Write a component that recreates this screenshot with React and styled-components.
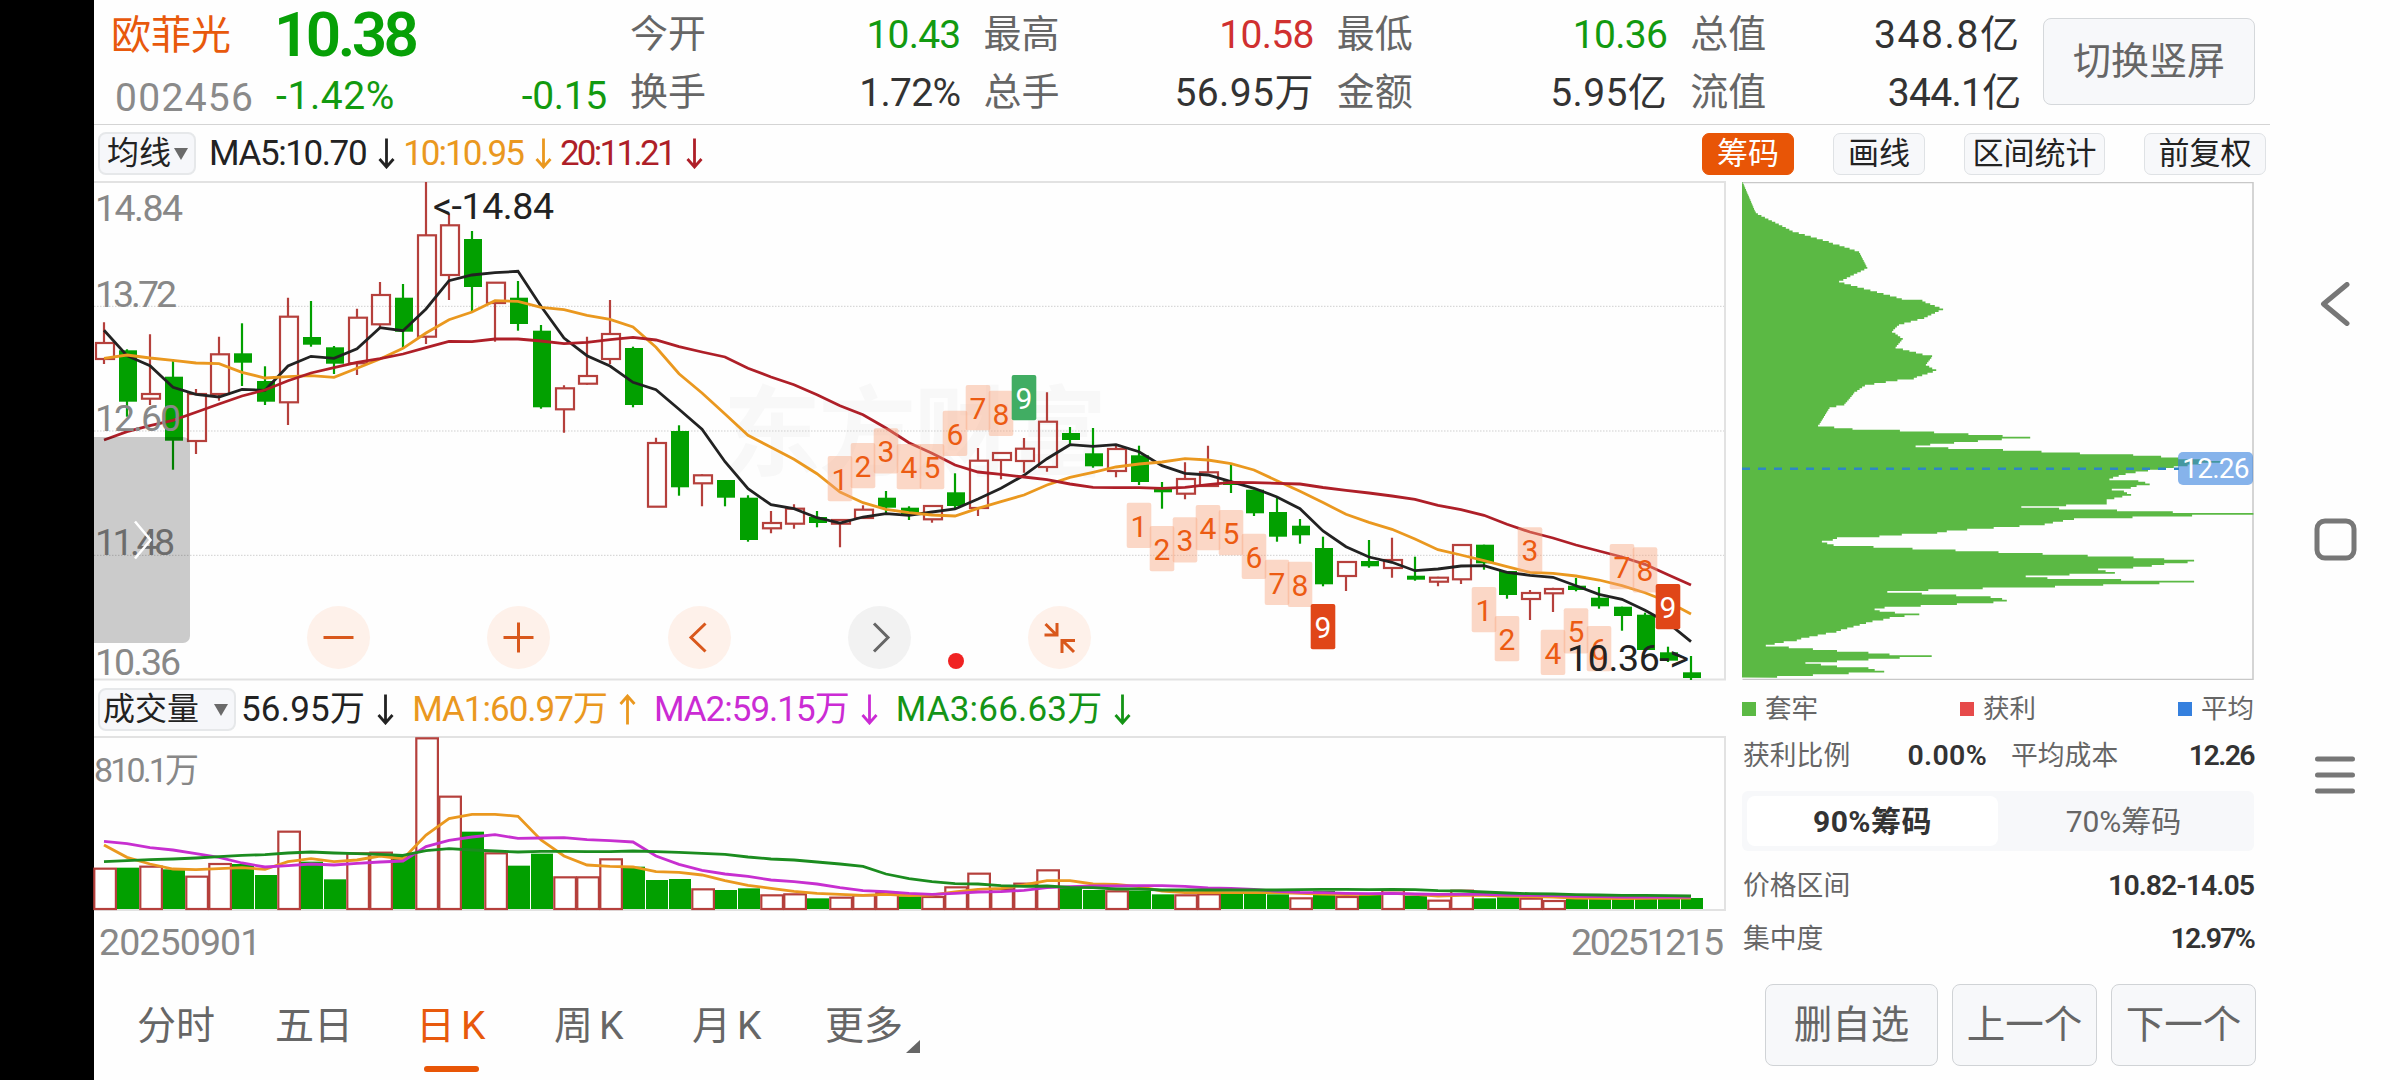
/* eslint-disable react/prop-types */
import React from "react";
import styled, { createGlobalStyle } from "styled-components";

const RED = "#b5403c";
const GREEN = "#02a000";
const ORANGE = "#e8590c";

const STEP = 23;
const cx = (i) => 10 + i * STEP;

// [up, high, bodyTop, bodyBottom, low]
const CANDLES = [
  [1, 140.3, 161, 177, 182], [0, 167.3, 168.3, 219.7, 234.7], [1, 152.3, 212, 216.7, 223],
  [0, 177.3, 194.7, 258.7, 287.7], [1, 207, 212, 259, 272], [1, 154.7, 172.3, 212, 218.7],
  [0, 141.3, 171.3, 180.7, 204], [0, 184.3, 199, 219.7, 223], [1, 115.7, 134.7, 220.3, 243],
  [0, 119, 155, 162.7, 164.7], [0, 164, 165.3, 181.7, 192], [1, 126.7, 135.7, 181.3, 193],
  [1, 100, 113, 142.3, 145.7], [0, 102, 115.7, 149.7, 165.7], [1, 0, 53.3, 154.7, 162],
  [1, 31.3, 43.3, 93, 118], [0, 49, 57, 105, 129.7], [1, 100.7, 100.7, 121, 159.7],
  [0, 99, 115.7, 142, 148.7], [0, 143, 148.7, 225.3, 226.7], [1, 203.3, 206.3, 227.3, 250.7],
  [1, 154.7, 194, 201.7, 202.7], [1, 118, 152, 177, 182], [0, 164.7, 166, 223, 225.3],
  [1, 255.7, 261, 324.7, 325], [0, 243.3, 249, 305.3, 313.7], [1, 292.3, 293.3, 301.3, 324.3],
  [0, 298, 298, 315.7, 324.3], [0, 313.3, 315.7, 358, 359.7], [1, 329, 341, 346.3, 351.3],
  [1, 322.3, 326.7, 341.7, 346.7], [0, 329, 335, 341, 345.3], [1, 337.3, 338, 341.7, 365.3],
  [1, 323.3, 327.7, 336, 336], [0, 309, 315.7, 325.7, 331.7], [0, 324.3, 325.7, 333, 338],
  [1, 324, 324, 337.3, 340.7], [0, 291.3, 310.3, 324, 326.3], [1, 266, 278.7, 326, 334],
  [1, 271, 271, 278, 297.3], [1, 256, 266.7, 279, 290.7], [1, 210.3, 239.7, 285, 289.7],
  [0, 245, 251, 258, 262], [0, 246, 271.3, 284.3, 285.7], [1, 263.7, 267, 289, 295.3],
  [0, 263.7, 273.3, 300, 303], [0, 300, 306.7, 310.3, 326.7], [1, 280.3, 297, 311.7, 317.3],
  [1, 263.7, 290.3, 304, 305], [0, 281.3, 299.3, 303, 311], [0, 307.7, 307.7, 331.3, 334],
  [0, 314.7, 330, 354.7, 359.7], [0, 337, 343.7, 353.3, 361.7], [0, 354.7, 366, 402.3, 404.3],
  [1, 380, 380, 394, 409], [0, 358, 379, 384.3, 385.7], [1, 355.7, 378, 386, 395.7],
  [0, 374.7, 393.7, 397.7, 398.7], [1, 394.7, 395.7, 399.7, 404.3], [1, 363, 363, 397.3, 402],
  [0, 362.7, 362.7, 381.3, 387.7], [0, 389, 389, 413, 416.7], [1, 408, 411, 417, 438],
  [1, 405.7, 407, 411.3, 430], [0, 396, 403.7, 408, 409.3], [0, 405, 415.7, 424.3, 426.7],
  [0, 424.7, 424.7, 434, 448.7], [0, 430.7, 432.7, 468, 469], [0, 464.7, 470.3, 478.7, 480],
  [0, 474, 490.3, 496, 498],
];

const MA5 = [
  148.3, 173.7, 183.7, 205.3, 212.3, 215, 207.3, 208.3, 184, 174.3, 176.3, 166.7, 145.7, 148.7,
  127, 98.7, 93, 90.7, 89.3, 124.3, 156, 173.7, 184, 200.3, 207.7, 227.3, 247.3, 279.7, 306.7,
  322.7, 326.7, 335.7, 341, 335, 331.7, 333.3, 330, 327, 317, 306.3, 293.3, 276.7, 262.7, 264.3,
  262.7, 269.7, 283.7, 291.3, 293, 299.7, 306.3, 315, 326.7, 349, 364.7, 375, 380.3, 388.7, 387,
  384, 383.7, 390.3, 393.3, 395.3, 403.7, 412.3, 417.3, 428.3, 441, 459.7,
];
const MA10 = [
  176.3, 173, 176, 178.3, 181, 181.7, 190.3, 196, 194.7, 193.7, 195.3, 186.3, 177, 166.3, 151,
  137.7, 130, 118.7, 119.3, 125.3, 127.7, 133.3, 137.3, 145, 165.3, 191.7, 211, 232, 253.3,
  265.3, 277.3, 291.7, 310, 320.7, 327.3, 330.7, 333, 334, 326.3, 319.7, 313, 303, 295.3, 290.3,
  285, 282, 280, 276.7, 278, 281.7, 288, 298.7, 309.3, 320.5, 332.3, 340.3, 347.3, 357, 367.7,
  373, 378.7, 384.7, 390.3, 391.3, 394, 398, 403.7, 410.7, 419.7, 432,
];
const MA20 = [
  258, 249.7, 243.7, 238.3, 230.3, 222, 214, 208, 198.7, 191, 185.7, 180.3, 176.7, 172, 165.7,
  159.3, 159.7, 157, 157, 159, 161.7, 160.3, 157.7, 155.3, 158, 164.7, 170, 175, 186.3, 195,
  202.7, 212.7, 223.7, 232.7, 246, 260.7, 271.3, 283, 290, 292.3, 295, 297.7, 302, 305.3, 305.6,
  305.7, 306.3, 305.3, 302.7, 300.3, 300.7, 301.3, 302, 305.5, 308.3, 311, 314, 317.3, 323.3,
  327.7, 333.3, 342.3, 350, 356, 363, 369, 375, 382.3, 392.7, 403,
];

// [candle index, count, top]
const COUNTS = [
  [32, 1, 274], [33, 2, 261], [34, 3, 246.3], [35, 4, 262], [36, 5, 262], [37, 6, 228.7],
  [38, 7, 203], [39, 8, 208.7], [40, 9, 193, "#41ad63"],
  [45, 1, 320.7], [46, 2, 344], [47, 3, 335.3], [48, 4, 323], [49, 5, 328], [50, 6, 351.7],
  [51, 7, 377.7], [52, 8, 379.7], [53, 9, 422, "#e04618"],
  [60, 1, 405], [61, 2, 434], [62, 3, 345.3], [63, 4, 447.7], [64, 5, 426.3], [65, 6, 444],
  [66, 7, 362], [67, 8, 365.3], [68, 9, 402, "#e04618"],
];

// volume samples, three units per pixel
const vy = (v) => v / 3 - 57;
const VOL_COLORS = [
  "RGRGRRGGRG",
  "GRRGRRGRGG",
  "RRRGGGRGGR",
  "RGRRRGRRRR",
  "RRGGRGGRRG",
  "GGRGRGRGRR",
  "GGRRGGGGGG",
].join("");
const VOLS = [
  563, 563, 557, 568, 587, 549, 552, 585, 452, 545, 598, 517, 515, 525, 172, 347, 455, 517, 557,
  521, 589, 589, 535, 560, 600, 597, 625, 630, 625, 643, 640, 655, 650, 643, 636, 649, 648, 619,
  578, 625, 608, 568, 620, 630, 631, 632, 643, 643, 640, 637, 640, 643, 652, 633, 648, 643, 628,
  647, 659, 629, 655, 652, 653, 660, 656, 657, 657, 656, 655, 654,
];
const VMA1 = [
  495, 532, 552, 567, 569, 566, 563, 568, 545, 536, 545, 540, 528, 537, 465, 416, 403, 403, 409,
  480, 528, 555, 559, 561, 575, 577, 585, 602, 616, 625, 634, 640, 643, 646, 643, 647, 645, 636,
  628, 625, 615, 602, 602, 612, 613, 620, 633, 638, 637, 638, 638, 638, 640, 642, 644, 643, 640,
  643, 648, 646, 646, 648, 650, 651, 654, 655, 656, 655, 654, 654,
];
const VMA2 = [
  484, 491, 503, 510, 521, 532, 549, 561, 557, 552, 555, 550, 546, 543, 500, 481, 471, 464, 475,
  474, 473, 479, 482, 486, 528, 553, 571, 582, 589, 600, 605, 612, 623, 632, 635, 640, 643, 640,
  636, 635, 631, 623, 620, 618, 618, 617, 617, 619, 624, 625, 628, 634, 637, 638, 640, 641, 640,
  642, 643, 643, 643, 645, 646, 647, 649, 650, 651, 651, 651, 651,
];
const VMA3 = [
  545, 542, 539, 537, 534, 530, 526, 524, 519, 516, 519, 521, 523, 526, 512, 506, 510, 513, 516,
  514, 514, 515, 515, 513, 515, 517, 520, 523, 531, 537, 540, 546, 552, 559, 582, 596, 605, 611,
  612, 617, 619, 618, 622, 623, 627, 627, 630, 630, 630, 630, 630, 630, 629, 628, 628, 629, 628,
  629, 632, 633, 636, 639, 641, 642, 644, 645, 646, 646, 647, 648,
];

// chip distribution profile: [price level, amount]
const CHIPS = [
  [22, 38], [115, 76], [170, 183], [205, 300], [232, 376], [280, 400], [322, 318], [372, 500],
  [380, 560], [403, 620], [430, 565], [450, 492], [470, 472], [493, 503], [518, 482], [547, 588],
  [570, 570], [588, 600], [610, 535], [632, 393], [655, 362], [690, 333], [700, 290], [755, 257],
  [761, 357], [788, 873], [813, 540], [818, 635], [843, 1172], [848, 1253], [860, 1430],
  [871, 1330], [880, 1290], [888, 1215], [897, 1150], [912, 1103], [920, 1187], [927, 1220],
  [938, 1165], [945, 1110], [952, 1145], [960, 1166], [976, 1095], [988, 1095], [996, 847],
  [1001, 957], [1005, 1125], [1011, 1287], [1016, 1521], [1022, 1343], [1028, 1170],
  [1033, 1000], [1048, 915], [1053, 842], [1058, 767], [1063, 690], [1073, 603], [1078, 500],
  [1083, 435], [1088, 367], [1093, 312], [1103, 268], [1110, 302], [1115, 418], [1121, 531],
  [1126, 656], [1131, 781], [1136, 909], [1141, 1040], [1146, 1173], [1151, 1262], [1157, 1349],
  [1165, 1330], [1171, 1262], [1178, 1172], [1185, 1070], [1190, 1092], [1196, 1119],
  [1202, 987], [1206, 860], [1210, 923], [1215, 1137], [1221, 1349], [1227, 1248], [1232, 1085],
  [1238, 945], [1242, 735], [1247, 577], [1251, 458], [1255, 558], [1260, 658], [1265, 758],
  [1270, 781], [1276, 805], [1282, 766], [1287, 660], [1292, 555], [1297, 450], [1302, 421],
  [1306, 390], [1310, 436], [1315, 480], [1321, 551], [1327, 508], [1332, 465], [1340, 415],
  [1370, 310], [1395, 195], [1413, 105], [1419, 172], [1424, 242], [1430, 312], [1436, 403],
  [1445, 587], [1451, 494], [1456, 403], [1461, 312], [1465, 220], [1469, 265], [1473, 312],
  [1478, 357], [1483, 403], [1490, 449], [1496, 346], [1501, 242], [1508, 138],
];

const line = (values, fn = (v) => v) => values.map((v, i) => `${cx(i)},${fn(v)}`).join(" ");

const chipPath = () => {
  const h = 5.2;
  let d = "M0 0";
  for (let y = 22; y < 1508; y += h) {
    const hit = CHIPS.find(([p]) => p >= y && p < y + h);
    let x;
    if (hit) {
      x = hit[1];
    } else {
      const mid = y + h / 2;
      const k = CHIPS.findIndex(([p]) => p > mid);
      if (k < 1) break;
      const [y0, x0] = CHIPS[k - 1];
      const [y1, x1] = CHIPS[k];
      x = x0 + ((x1 - x0) * (mid - y0)) / (y1 - y0);
    }
    const px = ((x - 36) / 2.904).toFixed(1);
    d += `L${px} ${((y - 22) / 3).toFixed(2)}L${px} ${((y + h - 22) / 3).toFixed(2)}`;
  }
  return `${d}L0 495.6Z`;
};

const Arrow = ({ up }) => (
  <ArrowSvg width="17" height="31" viewBox="0 0 17 31" $up={up}>
    <path d="M8.5 0.5V29M1.5 21L8.5 29L15.5 21" />
  </ArrowSvg>
);

const Stat = ({ label, value, color, spacing }) => (
  <StatCell>
    <StatLabel>{label}</StatLabel>
    <StatValue $color={color} $spacing={spacing}>
      {value}
    </StatValue>
  </StatCell>
);

const Glyph = ({ d, color = "#d9581c" }) => (
  <svg width="63" height="63" viewBox="0 0 63 63" fill="none" stroke={color} strokeWidth="3">
    <path d={d} />
  </svg>
);

const PriceChart = () => (
  <ChartBox $height={499}>
    <ChartSvg width="1632" height="499" viewBox="0 0 1632 499">
      <Watermark x="629" y="286" textLength="384">
        东方财富
      </Watermark>
      {[124.3, 249, 373.3].map((y) => (
        <line key={y} x1="0" x2="1631" y1={y} y2={y} stroke="#cfcfcf" strokeDasharray="1.5 1.5" />
      ))}
      <path d="M0 0H1631V497.5H0" fill="none" stroke="#e2e2e2" strokeWidth="2" />
      {CANDLES.map(([up, hi, top, bottom, lo], i) => {
        const x = cx(i);
        return up ? (
          <g key={i} stroke={RED} strokeWidth="2.2" fill="none">
            <path d={`M${x} ${hi}V${top}M${x} ${bottom}V${lo}`} />
            <rect x={x - 8} y={top} width="18" height={bottom - top} />
          </g>
        ) : (
          <g key={i} fill={GREEN}>
            <rect x={x - 1.1} y={hi} width="2.2" height={lo - hi} />
            <rect x={x - 8} y={top} width="18" height={bottom - top} />
          </g>
        );
      })}
      <MaLine points={line(MA5)} stroke="#222" />
      <MaLine points={line(MA10)} stroke="#ea981f" />
      <MaLine points={line(MA20)} stroke="#ae1f28" />
      {COUNTS.map(([i, n, top, fill]) => (
        <g key={i}>
          <rect
            x={cx(i) - 12.3}
            y={top}
            width="24.6"
            height="45.3"
            rx="2"
            fill={fill || "#f9a27a"}
            fillOpacity={fill ? 1 : 0.42}
          />
          <CountText x={cx(i)} y={top + 34} $solid={Boolean(fill)}>
            {n}
          </CountText>
        </g>
      ))}
      <AxisText x="1" y="39" textLength="88">14.84</AxisText>
      <AxisText x="1" y="125" textLength="82">13.72</AxisText>
      <AxisText x="1" y="248.7" textLength="86">12.60</AxisText>
      <AxisText x="1" y="373.3" textLength="80">11.48</AxisText>
      <AxisText x="1" y="493.3" textLength="86">10.36</AxisText>
      <AxisText $dark x="339" y="37" textLength="121">&lt;-14.84</AxisText>
      <AxisText $dark x="1473" y="488.7" textLength="122">10.36-&gt;</AxisText>
    </ChartSvg>
    <Drawer>
      <svg width="20" height="42" viewBox="0 0 20 42" fill="none" stroke="#fff" strokeWidth="2.5">
        <path d="M2 2.5L17.5 21L2 39.5" />
      </svg>
    </Drawer>
    <Controls>
      <RoundButton>
        <Glyph d="M16.5 31.5H46.5" />
      </RoundButton>
      <RoundButton>
        <Glyph d="M16.5 31.5H46.5M31.5 16.5V46.5" />
      </RoundButton>
      <RoundButton>
        <Glyph d="M37.5 17.5L23 31.5L37.5 45.5" />
      </RoundButton>
      <RoundButton $muted>
        <Glyph d="M26 17.5L40 31.5L26 45.5" color="#666" />
      </RoundButton>
      <RoundButton>
        <Glyph d="M17.5 18L28.5 29M16.5 29H29V17M46 46L35 35M34 47V34.5H47" />
      </RoundButton>
    </Controls>
    <RedDot />
  </ChartBox>
);

const VolumeChart = () => (
  <ChartBox $height={174}>
    <ChartSvg width="1632" height="174" viewBox="0 0 1632 174">
      <path d="M0 0H1631V173H0" fill="none" stroke="#e2e2e2" strokeWidth="2" />
      {VOLS.map((v, i) => {
        const x = cx(i);
        const y = vy(v);
        return VOL_COLORS[i] === "R" ? (
          <rect
            key={i}
            x={x - 9.7}
            y={y + 1}
            width="21.6"
            height={171 - y}
            fill="#fff"
            stroke={RED}
            strokeWidth="2.2"
          />
        ) : (
          <rect key={i} x={x - 10} y={y} width="22" height={172 - y} fill={GREEN} />
        );
      })}
      <MaLine points={line(VMA1, vy)} stroke="#ea981f" />
      <MaLine points={line(VMA2, vy)} stroke="#c72fd0" />
      <MaLine points={line(VMA3, vy)} stroke="#1b8c1f" />
      <VolumeMax x="0" y="45" textLength="105">
        810.1万
      </VolumeMax>
    </ChartSvg>
  </ChartBox>
);

const ChipChart = () => (
  <ChipBox>
    <svg width="512" height="498" viewBox="0 0 512 498">
      <path d="M0.5 0.5H511V497.5H0.5" fill="none" stroke="#c8c8c8" strokeWidth="1.5" />
      <path d={chipPath()} fill="#5bb944" />
      <line x1="0" x2="437" y1="286.7" y2="286.7" stroke="#2f86c4" strokeWidth="2.5" strokeDasharray="8 8" />
    </svg>
    <PriceTag>12.26</PriceTag>
  </ChipBox>
);

export default function App() {
  return (
    <>
      <GlobalStyle />
      <Screen>
        <Notch />
        <Main>
          <Header>
            <Stock>
              <StockRow>
                <StockName>欧菲光</StockName>
                <StockPrice>10.38</StockPrice>
              </StockRow>
              <StockRow>
                <StockCode>002456</StockCode>
                <Change>-1.42%</Change>
                <Change $end>-0.15</Change>
              </StockRow>
            </Stock>
            <Stats>
              <Stat label="今开" value="10.43" color="#129a10" spacing={-0.8} />
              <Stat label="最高" value="10.58" color="#d03030" spacing={-0.7} />
              <Stat label="最低" value="10.36" color="#129a10" spacing={-0.7} />
              <Stat label="总值" value="348.8亿" spacing={1.6} />
              <Stat label="换手" value="1.72%" spacing={-0.7} />
              <Stat label="总手" value="56.95万" spacing={0.4} />
              <Stat label="金额" value="5.95亿" spacing={0.4} />
              <Stat label="流值" value="344.1亿" spacing={-0.7} />
            </Stats>
            <RotateButton>切换竖屏</RotateButton>
          </Header>

          <Toolbar>
            <Picker $width={98} $pad={7}>
              均线
              <Caret />
            </Picker>
            <Indicators $gap={8}>
              <Indicator $color="#222" $spacing={-1.4}>
                MA5:10.70
                <Arrow />
              </Indicator>
              <Indicator $color="#ea981f" $spacing={-2}>
                10:10.95
                <Arrow />
              </Indicator>
              <Indicator $color="#ae1f28" $spacing={-2.7}>
                20:11.21
                <Arrow />
              </Indicator>
            </Indicators>
            <Tools>
              <Tool $active $width={92}>筹码</Tool>
              <Tool $width={92}>画线</Tool>
              <Tool $width={141}>区间统计</Tool>
              <Tool $width={122}>前复权</Tool>
            </Tools>
          </Toolbar>

          <Body>
            <div>
              <PriceChart />
              <VolumeBar>
                <Picker $width={138} $pad={3}>
                  成交量
                  <Caret />
                </Picker>
                <Indicators $gap={18}>
                  <Indicator $color="#222" $spacing={0.2}>
                    56.95万
                    <Arrow />
                  </Indicator>
                  <Indicator $color="#ea981f" $spacing={-1}>
                    MA1:60.97万
                    <Arrow up />
                  </Indicator>
                  <Indicator $color="#cb2bd4" $spacing={-1}>
                    MA2:59.15万
                    <Arrow />
                  </Indicator>
                  <Indicator $color="#149416" $spacing={0.2}>
                    MA3:66.63万
                    <Arrow />
                  </Indicator>
                </Indicators>
              </VolumeBar>
              <VolumeChart />
              <Dates>
                <DateLabel $spacing={-0.9}>20250901</DateLabel>
                <DateLabel $spacing={-2.2}>20251215</DateLabel>
              </Dates>
            </div>
            <div>
              <ChipChart />
              <Legend>
                <LegendItem $color="#5bb944">套牢</LegendItem>
                <LegendItem $color="#e64a4a">获利</LegendItem>
                <LegendItem $color="#3580de">平均</LegendItem>
              </Legend>
              <CostRow>
                <InfoPair $width={244} $spacing={0.3}>
                  获利比例<b>0.00%</b>
                </InfoPair>
                <InfoPair $width={243} $spacing={-1.6}>
                  平均成本<b>12.26</b>
                </InfoPair>
              </CostRow>
              <Segment>
                <SegmentItem $active>90%筹码</SegmentItem>
                <SegmentItem>70%筹码</SegmentItem>
              </Segment>
              <InfoRow $spacing={-1}>
                价格区间<b>10.82-14.05</b>
              </InfoRow>
              <InfoRow $spacing={-1.8}>
                集中度<b>12.97%</b>
              </InfoRow>
            </div>
          </Body>

          <Footer>
            <Tabs>
              <Tab>分时</Tab>
              <Tab>五日</Tab>
              <Tab $active>
                日<Latin>K</Latin>
              </Tab>
              <Tab>
                周<Latin>K</Latin>
              </Tab>
              <Tab>
                月<Latin>K</Latin>
              </Tab>
              <Tab>
                更多
                <Corner width="14" height="13" viewBox="0 0 14 13">
                  <path d="M14 0V13H0Z" />
                </Corner>
              </Tab>
            </Tabs>
            <FooterButtons>
              <FooterButton $width={173}>删自选</FooterButton>
              <FooterButton $width={145}>上一个</FooterButton>
              <FooterButton $width={145}>下一个</FooterButton>
            </FooterButtons>
          </Footer>
        </Main>
        <SystemNav>
          <svg width="44" height="44" viewBox="0 0 44 44">
            <path d="M34 2.5L10.5 22L34 41.5" />
          </svg>
          <svg width="44" height="44" viewBox="0 0 44 44">
            <rect x="4" y="3" width="37" height="37" rx="8" />
          </svg>
          <svg width="44" height="44" viewBox="0 0 44 44">
            <path d="M4.5 5H39.5M4.5 21H39.5M4.5 37H39.5" />
          </svg>
        </SystemNav>
      </Screen>
    </>
  );
}

const GlobalStyle = createGlobalStyle`
  body {
    margin: 0;
    background: #fff;
  }

  * {
    box-sizing: border-box;
  }

  svg {
    display: block;
    flex: none;
  }

  button {
    padding: 1px 0 0;
    font-family: inherit;
    line-height: 1.2;
  }
`;

const Screen = styled.div`
  display: flex;
  width: 2400px;
  height: 1080px;
  overflow: hidden;
  background: #fefefe;
  color: #666;
  font-family: Roboto, "Noto Sans CJK SC", sans-serif;
  line-height: 1.2;
  white-space: nowrap;
`;

const Notch = styled.div`
  width: 94px;
  background: #000;
`;

const Main = styled.div`
  display: flex;
  flex-direction: column;
  width: 2176px;
`;

const Header = styled.header`
  display: flex;
  height: 125px;
  border-bottom: 1px solid #d4d4d4;
`;

const Stock = styled.div`
  width: 536px;
  padding: 5px 23px 0 17px;
`;

const StockRow = styled.div`
  display: flex;
  align-items: center;
  height: 61px;
  font-size: 39px;
`;

const StockName = styled.span`
  width: 163px;
  color: ${ORANGE};
  font-size: 40px;
`;

const StockPrice = styled.span`
  padding-right: 4px;
  color: #07a007;
  font-size: 62px;
  font-weight: 600;
  letter-spacing: -3.6px;
`;

const StockCode = styled.span`
  width: 165px;
  padding: 4px 0 0 4px;
  color: #8a8a8a;
  letter-spacing: 1.3px;
`;

const Change = styled.span`
  margin-left: ${({ $end }) => ($end ? "auto" : 0)};
  color: #129a10;
  letter-spacing: ${({ $end }) => ($end ? "-0.3px" : "0.6px")};
`;

const Stats = styled.div`
  display: grid;
  grid-template-columns: repeat(4, 353.4px);
  grid-auto-rows: 58px;
  width: 1413px;
  padding-top: 6px;
`;

const StatCell = styled.div`
  display: flex;
  justify-content: space-between;
  align-items: center;
  padding-right: 23px;
  font-size: 38px;
`;

const StatLabel = styled.span`
  color: #666;
`;

const StatValue = styled.span`
  color: ${({ $color }) => $color || "#333"};
  font-size: 39px;
  letter-spacing: ${({ $spacing }) => $spacing}px;
`;

const RotateButton = styled.button`
  width: 212px;
  height: 87px;
  margin-top: 18px;
  border: 1px solid #d5d8db;
  border-radius: 8px;
  background: #f7f8fa;
  color: #666;
  font-size: 38px;
`;

const Toolbar = styled.div`
  display: flex;
  align-items: center;
  gap: 13px;
  height: 56px;
  padding: 1px 4px 0;
`;

const Picker = styled.div`
  display: flex;
  align-items: center;
  justify-content: space-between;
  width: ${({ $width }) => $width}px;
  height: 43px;
  padding: 0 6px 0 ${({ $pad }) => $pad}px;
  border: 2px solid #e6e8ea;
  border-radius: 8px;
  background: #f6f7fa;
  color: #222;
  font-size: 32px;
`;

const Caret = styled.i`
  border: solid transparent;
  border-width: 12px 7px 0;
  border-top-color: #6a6a6a;
`;

const Indicators = styled.div`
  display: flex;
  align-items: center;
  gap: ${({ $gap }) => $gap}px;
`;

const Indicator = styled.span`
  display: flex;
  align-items: center;
  gap: 12px;
  color: ${({ $color }) => $color};
  font-size: 35px;
  letter-spacing: ${({ $spacing }) => $spacing}px;
`;

const ArrowSvg = styled.svg`
  fill: none;
  stroke: currentColor;
  stroke-width: 2.8;
  transform: ${({ $up }) => ($up ? "rotate(180deg)" : "none")};
`;

const Tools = styled.div`
  display: flex;
  gap: 39px;
  margin-left: auto;
`;

const Tool = styled.button`
  width: ${({ $width }) => $width}px;
  height: 42px;
  border: 1px solid ${({ $active }) => ($active ? "#e85506" : "#dfe2e5")};
  border-radius: 7px;
  background: ${({ $active }) => ($active ? "#e85506" : "#f7f8fa")};
  color: ${({ $active }) => ($active ? "#fff" : "#222")};
  font-size: 31px;
`;

const Body = styled.div`
  display: grid;
  grid-template-columns: 1632px 512px;
  gap: 16px;
  padding-top: 1px;
`;

const ChartBox = styled.div`
  position: relative;
  height: ${({ $height }) => $height}px;
`;

const ChartSvg = styled.svg`
  overflow: visible;
`;

const MaLine = styled.polyline`
  fill: none;
  stroke-width: 2.8;
`;

const Watermark = styled.text`
  fill: #f8f8f8;
  font-size: 98px;
  font-weight: 700;
`;

const CountText = styled.text`
  fill: ${({ $solid }) => ($solid ? "#fff" : "#ec5b12")};
  font-size: 30px;
  text-anchor: middle;
`;

const AxisText = styled.text`
  fill: ${({ $dark }) => ($dark ? "#222" : "#888")};
  font-size: 37.5px;
`;

const VolumeMax = styled.text`
  fill: #888;
  font-size: 34px;
`;

const Drawer = styled.div`
  position: absolute;
  top: 255px;
  left: 0;
  display: flex;
  align-items: center;
  width: 96px;
  height: 206px;
  padding-left: 39px;
  border-radius: 0 7px 7px 0;
  background: rgba(0, 0, 0, 0.2);
`;

const Controls = styled.div`
  position: absolute;
  top: 424px;
  left: 213px;
  display: flex;
  gap: 117.3px;
`;

const RoundButton = styled.div`
  width: 63px;
  height: 63px;
  border-radius: 50%;
  background: ${({ $muted }) => ($muted ? "#f2f2f2" : "#fef1ea")};
`;

const RedDot = styled.i`
  position: absolute;
  top: 471px;
  left: 854px;
  width: 16px;
  height: 16px;
  border-radius: 50%;
  background: #f02222;
`;

const VolumeBar = styled.div`
  display: flex;
  align-items: center;
  gap: 5px;
  height: 56px;
  padding: 1px 0 0 4px;
`;

const Dates = styled.div`
  display: flex;
  justify-content: space-between;
  padding: 9px 4px 0 5px;
  color: #888;
  font-size: 37.5px;
`;

const DateLabel = styled.span`
  letter-spacing: ${({ $spacing }) => $spacing}px;
`;

const ChipBox = styled.div`
  position: relative;
  height: 499px;
`;

const PriceTag = styled.div`
  position: absolute;
  top: 270px;
  right: 1px;
  width: 75px;
  height: 33px;
  border-radius: 5px;
  background: rgba(53, 128, 222, 0.6);
  color: #fff;
  font-size: 28px;
  line-height: 33px;
  text-align: center;
  letter-spacing: -0.8px;
`;

const Legend = styled.div`
  display: flex;
  justify-content: space-between;
  padding-top: 9px;
`;

const LegendItem = styled.span`
  display: flex;
  align-items: center;
  gap: 9px;
  height: 38px;
  font-size: 26.5px;

  &::before {
    content: "";
    width: 14px;
    height: 14px;
    background: ${({ $color }) => $color};
  }
`;

const CostRow = styled.div`
  display: flex;
  justify-content: space-between;
  height: 56px;
  padding: 1px 0 0 1px;
`;

const InfoPair = styled.div`
  display: flex;
  justify-content: space-between;
  align-items: center;
  width: ${({ $width }) => $width}px;
  font-size: 26.8px;

  b {
    color: #333;
    font-size: 28.5px;
    font-weight: 600;
    letter-spacing: ${({ $spacing }) => $spacing}px;
  }
`;

const Segment = styled.div`
  display: flex;
  height: 60px;
  margin: 7px 0 9px;
  padding: 5px;
  border-radius: 6px;
  background: #f7f8fa;
`;

const SegmentItem = styled.div`
  flex: 1;
  border-radius: 8px;
  background: ${({ $active }) => ($active ? "#fff" : "transparent")};
  color: ${({ $active }) => ($active ? "#333" : "#666")};
  font-size: 30px;
  font-weight: ${({ $active }) => ($active ? 700 : 400)};
  line-height: 51px;
  text-align: center;
  letter-spacing: ${({ $active }) => ($active ? "0.5px" : "0")};
`;

const InfoRow = styled(InfoPair)`
  width: auto;
  height: 53px;
  padding-left: 1px;
`;

const Footer = styled.footer`
  display: flex;
  justify-content: space-between;
  margin-top: auto;
  padding: 0 14px 14px 43px;
`;

const Tabs = styled.nav`
  display: flex;
  align-items: center;
  gap: 60px;
  padding-top: 2px;
`;

const Tab = styled.div`
  position: relative;
  width: 78px;
  color: ${({ $active }) => ($active ? ORANGE : "#666")};
  font-size: 39px;

  &:nth-child(3) {
    margin-left: 3px;
  }

  &:nth-child(6) {
    margin-left: -5px;
  }

  &::after {
    content: "";
    position: absolute;
    bottom: -23px;
    left: 8px;
    width: 55px;
    height: 6px;
    border-radius: 3px;
    background: ${({ $active }) => ($active ? "#e85506" : "transparent")};
  }
`;

const Latin = styled.span`
  margin-left: 6px;
`;

const Corner = styled.svg`
  position: absolute;
  right: -17px;
  bottom: -4px;
  fill: #666;
`;

const FooterButtons = styled.div`
  display: flex;
  gap: 14px;
`;

const FooterButton = styled.button`
  width: ${({ $width }) => $width}px;
  height: 82px;
  border: 1px solid #d0d3d6;
  border-radius: 8px;
  background: #f7f8fa;
  color: #666;
  font-size: 38.5px;
`;

const SystemNav = styled.aside`
  display: flex;
  flex-direction: column;
  align-items: center;
  gap: 192px;
  width: 130px;
  padding: 282px 0 0 0;

  svg {
    fill: none;
    stroke: #777;
    stroke-width: 5;
    stroke-linecap: round;
    stroke-linejoin: round;
  }
`;
